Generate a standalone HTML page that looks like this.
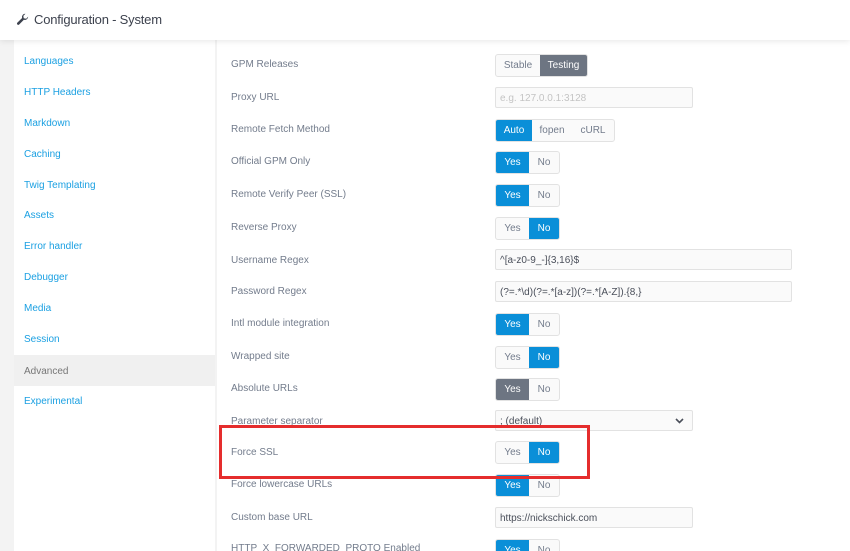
<!DOCTYPE html><html><head><style>
*{box-sizing:border-box;margin:0;padding:0}
html,body{width:850px;height:551px;overflow:hidden}
body{background:#f3f3f3;font-family:"Liberation Sans",sans-serif;position:relative}
.hdr{position:absolute;left:0;top:0;width:850px;height:40px;background:#fff;box-shadow:0 1px 6px rgba(0,0,0,.1);z-index:2}
.hdr span{position:absolute;left:34px;top:12px;font-size:13px;color:#3d424e;letter-spacing:-.2px}
.side{position:absolute;left:14px;top:40px;width:201px;height:511px;background:#fff}
.side div{position:absolute;left:0;width:201px;height:31px;line-height:33px;padding-left:10px;font-size:10px;color:#1ba0e2}
.side .act{background:#f0f0f0;color:#777}
.main{position:absolute;left:217px;top:40px;width:633px;height:511px;background:#fff}
.l{position:absolute;left:231px;font-size:10px;color:#737c8c;margin-top:1px}
.g{position:absolute;left:495px;display:flex;height:23px;border:1px solid #e2e2e2;border-radius:3px;background:#fafafa;font-size:10px;color:#737c8c;overflow:hidden}
.g b{font-weight:normal;display:flex;align-items:center;justify-content:center;height:100%}
.g .on{background:#0a8fd8;color:#fff}
.g .gr{background:#6d7582;color:#fff}
.in{position:absolute;left:495px;width:198px;height:21px;border:1px solid #e2e2e2;border-radius:2px;background:#fafafa;font-size:10px;color:#4a4f5a;padding:5px 0 0 4px}
.in2{width:297px}
.red{position:absolute;left:219px;top:425px;width:371px;height:54px;border:3px solid #e52d2d}
</style></head><body>
<div class="hdr"><svg style="position:absolute;left:16px;top:13px" width="13" height="13" viewBox="0 0 16 16"><path d="M15 4.5a4 4 0 0 1-5.3 3.8L3.6 14.4a1.6 1.6 0 0 1-2.2-2.2l6.1-6.1A4 4 0 0 1 11.5 1L9 3.5 9.5 6.5 12.5 7 15 4.5z" fill="#3d424e"/></svg><span>Configuration - System</span></div>
<div class="side">
<div style="top:5px">Languages</div><div style="top:36px">HTTP Headers</div><div style="top:67px">Markdown</div><div style="top:98px">Caching</div><div style="top:129px">Twig Templating</div><div style="top:159px">Assets</div><div style="top:190px">Error handler</div><div style="top:221px">Debugger</div><div style="top:252px">Media</div><div style="top:283px">Session</div><div class="act" style="top:315px">Advanced</div><div style="top:345px">Experimental</div>
</div>
<div class="main"></div>
<div class="l" style="top:58px">GPM Releases</div>
<div class="g" style="top:54px"><b style="width:44px">Stable</b><b class="gr" style="width:47px">Testing</b></div>
<div class="l" style="top:91px">Proxy URL</div>
<div class="in" style="top:87px;color:#c4c4c4">e.g. 127.0.0.1:3128</div>
<div class="l" style="top:123px">Remote Fetch Method</div>
<div class="g" style="top:119px"><b class="on" style="width:36px">Auto</b><b style="width:40px">fopen</b><b style="width:42px">cURL</b></div>
<div class="l" style="top:155px">Official GPM Only</div>
<div class="g" style="top:151px"><b class="on" style="width:33px">Yes</b><b style="width:30px">No</b></div>
<div class="l" style="top:188px">Remote Verify Peer (SSL)</div>
<div class="g" style="top:184px"><b class="on" style="width:33px">Yes</b><b style="width:30px">No</b></div>
<div class="l" style="top:221px">Reverse Proxy</div>
<div class="g" style="top:217px"><b style="width:33px">Yes</b><b class="on" style="width:30px">No</b></div>
<div class="l" style="top:254px">Username Regex</div>
<div class="in in2" style="top:249px">^[a-z0-9_-]{3,16}$</div>
<div class="l" style="top:285px">Password Regex</div>
<div class="in in2" style="top:281px">(?=.*\d)(?=.*[a-z])(?=.*[A-Z]).{8,}</div>
<div class="l" style="top:317px">Intl module integration</div>
<div class="g" style="top:313px"><b class="on" style="width:33px">Yes</b><b style="width:30px">No</b></div>
<div class="l" style="top:350px">Wrapped site</div>
<div class="g" style="top:346px"><b style="width:33px">Yes</b><b class="on" style="width:30px">No</b></div>
<div class="l" style="top:382px">Absolute URLs</div>
<div class="g" style="top:378px"><b class="gr" style="width:33px">Yes</b><b style="width:30px">No</b></div>
<div class="l" style="top:415px">Parameter separator</div>
<div class="in" style="top:410px">; (default)<svg style="position:absolute;right:8px;top:7px" width="9" height="6" viewBox="0 0 9 6"><path d="M1 1l3.5 3.5L8 1" stroke="#4a4f5a" stroke-width="1.6" fill="none"/></svg></div>
<div class="l" style="top:446px">Force SSL</div>
<div class="g" style="top:441px"><b style="width:33px">Yes</b><b class="on" style="width:30px">No</b></div>
<div class="l" style="top:478px">Force lowercase URLs</div>
<div class="g" style="top:474px"><b class="on" style="width:33px">Yes</b><b style="width:30px">No</b></div>
<div class="l" style="top:511px">Custom base URL</div>
<div class="in" style="top:507px">https://nickschick.com</div>
<div class="l" style="top:542px">HTTP_X_FORWARDED_PROTO Enabled</div>
<div class="g" style="top:539px"><b class="on" style="width:33px">Yes</b><b style="width:30px">No</b></div>
<div class="red"></div>
</body></html>
